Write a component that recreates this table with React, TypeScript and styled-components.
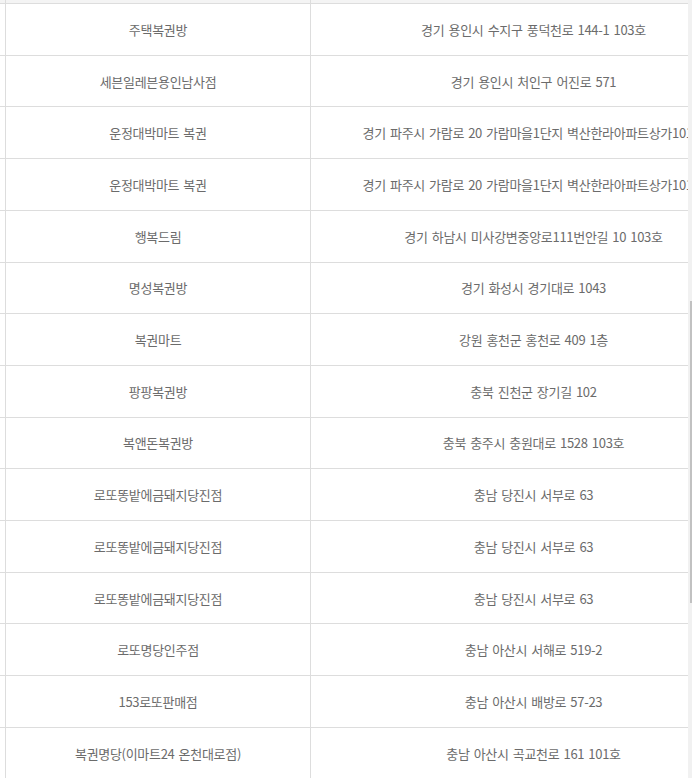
import React from "react";
import styled, { createGlobalStyle } from "styled-components";

const GlobalStyle = createGlobalStyle`
  html, body {
    margin: 0;
    padding: 0;
    height: 100%;
    overflow: hidden;
    background: #ffffff;
  }
  #root {
    height: 100%;
  }
`;

const Frame = styled.div`
  position: relative;
  height: 100vh;
  overflow: hidden;
  background: #ffffff;
  font-family: "Noto Sans CJK KR", "Noto Sans", "Liberation Sans", sans-serif;
`;

const Viewport = styled.div`
  width: 688px;
  height: 100%;
  overflow: hidden;
`;

const Table = styled.div`
  width: 756px;
`;

const HeadEdge = styled.div`
  box-sizing: border-box;
  display: grid;
  grid-template-columns: 306px 445px;
  padding-left: 5px;
  height: 4px;
  background: #f4f4f4;
  border-bottom: 1px solid #dddddd;
`;

const HeadCell = styled.div<{ $first?: boolean }>`
  box-sizing: border-box;
  border-left: ${(p) => (p.$first ? "1px solid #dddddd" : "none")};
  border-right: ${(p) => (p.$first ? "1px solid #dddddd" : "none")};
`;

const Row = styled.div`
  box-sizing: border-box;
  display: grid;
  grid-template-columns: 306px 445px;
  padding-left: 5px;
  height: 51.714px;
  border-bottom: 1px solid #dddddd;
  background: #ffffff;
`;

const Cell = styled.div<{ $first?: boolean }>`
  box-sizing: border-box;
  display: flex;
  align-items: center;
  justify-content: center;
  white-space: nowrap;
  font-size: 13px;
  letter-spacing: -0.3px;
  word-spacing: 1.5px;
  color: #6b6b6b;
  border-left: ${(p) => (p.$first ? "1px solid #dddddd" : "none")};
  border-right: ${(p) => (p.$first ? "1px solid #dddddd" : "none")};
`;

const Track = styled.div`
  position: absolute;
  top: 0;
  right: 0;
  width: 4px;
  height: 100%;
  background: #f1f1f1;
`;

const Thumb = styled.div`
  position: absolute;
  top: 301px;
  right: 0;
  width: 2px;
  height: 302px;
  background: #c1c1c1;
`;

const stores: [string, string][] = [
  ["주택복권방", "경기 용인시 수지구 풍덕천로 144-1 103호"],
  ["세븐일레븐용인남사점", "경기 용인시 처인구 어진로 571"],
  ["운정대박마트 복권", "경기 파주시 가람로 20 가람마을1단지 벽산한라아파트상가101호"],
  ["운정대박마트 복권", "경기 파주시 가람로 20 가람마을1단지 벽산한라아파트상가101호"],
  ["행복드림", "경기 하남시 미사강변중앙로111번안길 10 103호"],
  ["명성복권방", "경기 화성시 경기대로 1043"],
  ["복권마트", "강원 홍천군 홍천로 409 1층"],
  ["팡팡복권방", "충북 진천군 장기길 102"],
  ["복앤돈복권방", "충북 충주시 충원대로 1528 103호"],
  ["로또똥밭에금돼지당진점", "충남 당진시 서부로 63"],
  ["로또똥밭에금돼지당진점", "충남 당진시 서부로 63"],
  ["로또똥밭에금돼지당진점", "충남 당진시 서부로 63"],
  ["로또명당인주점", "충남 아산시 서해로 519-2"],
  ["153로또판매점", "충남 아산시 배방로 57-23"],
  ["복권명당(이마트24 온천대로점)", "충남 아산시 곡교천로 161 101호"],
];

export default function App() {
  return (
    <>
      <GlobalStyle />
      <Frame>
        <Viewport>
          <Table>
            <HeadEdge>
              <HeadCell $first />
              <HeadCell />
            </HeadEdge>
            {stores.map(([name, addr], i) => (
              <Row key={i}>
                <Cell $first>{name}</Cell>
                <Cell>{addr}</Cell>
              </Row>
            ))}
          </Table>
        </Viewport>
        <Track>
          <Thumb />
        </Track>
      </Frame>
    </>
  );
}
